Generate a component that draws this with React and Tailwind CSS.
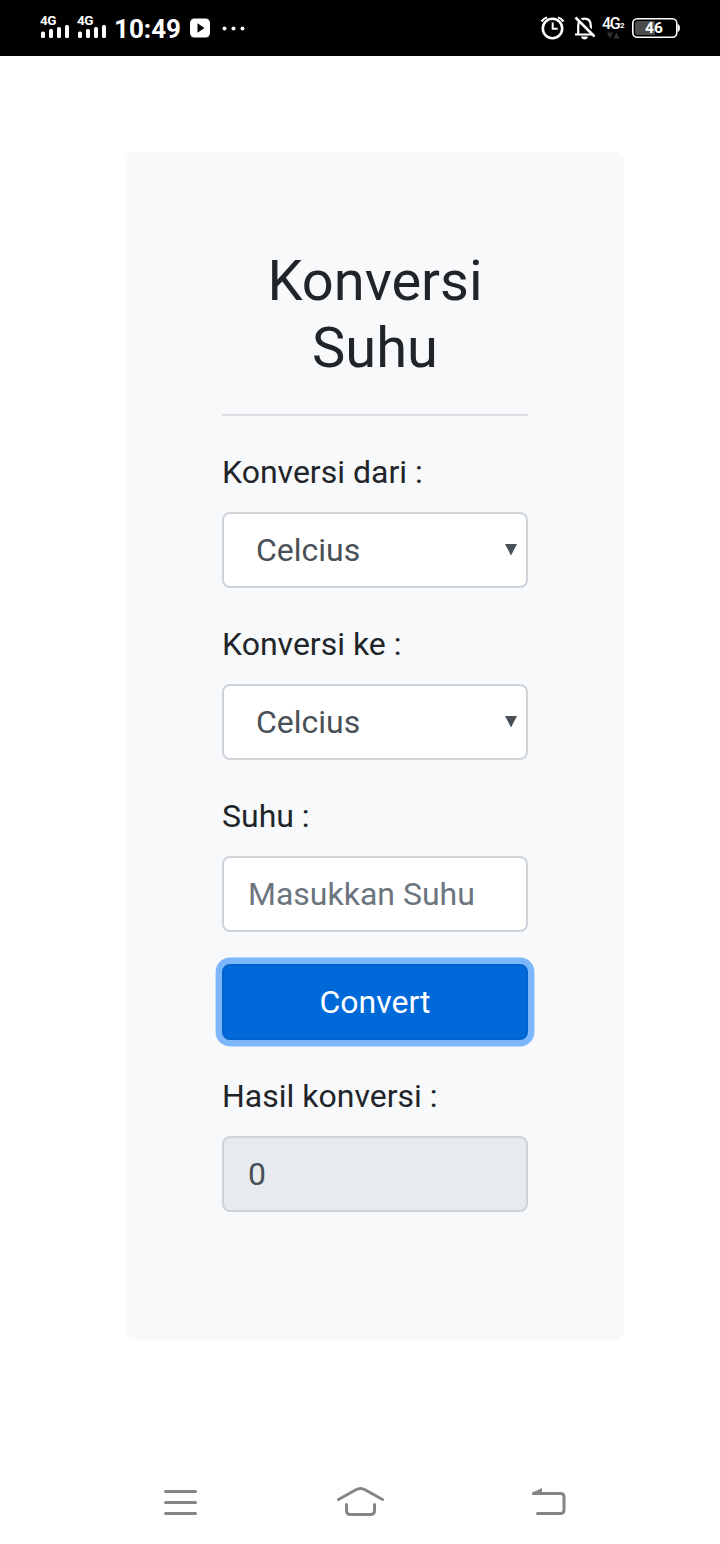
import React from "react";

function Signal() {
  return (
    <div className="flex w-[29px] flex-col items-start">
      <span className="h-[11px] text-[13.5px] leading-[12px] font-bold tracking-[-0.6px]">4G</span>
      <svg className="-mt-px" width="29" height="14" viewBox="0 0 29 14" fill="#fff">
        <rect x="1" y="7.5" width="4" height="6.5" rx="1.5" />
        <rect x="9" y="5" width="4" height="9" rx="1.5" />
        <rect x="17" y="3" width="4" height="11" rx="1.5" />
        <rect x="25" y="1" width="4" height="13" rx="1.5" />
      </svg>
    </div>
  );
}

function StatusBar() {
  return (
    <header className="flex h-14 items-start bg-black pl-10 text-white">
      <div className="flex gap-2 pt-[14px]">
        <Signal />
        <Signal />
      </div>
      <span className="ml-2 w-[68px] pt-[13px] text-[26px] leading-8 font-bold whitespace-nowrap">10:49</span>
      <svg className="mt-[18px] ml-[8px]" width="21" height="20" viewBox="0 0 21 20">
        <rect x="0" y="0.5" width="20" height="19" rx="4.5" fill="#fff" />
        <path d="M7.5 5.2v9.6l7-4.8z" fill="#000" />
      </svg>
      <svg className="mt-[26px] ml-[11px]" width="23" height="5" viewBox="0 0 23 5" fill="#fff">
        <circle cx="2.5" cy="2.5" r="2" />
        <circle cx="11.5" cy="2.5" r="2" />
        <circle cx="20.5" cy="2.5" r="2" />
      </svg>
      <div className="ml-auto flex w-[180px] items-start">
        <svg className="mt-[15px]" width="26" height="26" viewBox="0 0 26 26" fill="none" stroke="#fff">
          <circle cx="12.5" cy="13.5" r="9.7" strokeWidth="2.6" />
          <path d="M12.7 7.5v6.3h5" strokeWidth="2" />
          <path d="M1.5 6.500Q4 3 7 2.500M23.5 6.500Q21 3 18 2.500" strokeWidth="2.2" />
        </svg>
        <svg className="mt-[15px] ml-[7px]" width="24" height="26" viewBox="0 0 24 26" fill="none" stroke="#fff">
          <path d="M5.2 19.5V11c0-5 2.5-7.3 6.3-7.3S17.8 6 17.8 11v8.5M2 19.5h19" strokeWidth="2.2" />
          <path d="M8 21.5h7c-.5 4-6.500 4-7 0z" fill="#fff" stroke="none" />
          <path d="M4.500 1.500l19 19" stroke="#000" strokeWidth="2" />
          <path d="M2.500 2.500l19 19" strokeWidth="2.500" />
        </svg>
        <div className="ml-[5px] flex w-[25px] flex-col pt-[15px]">
          <div className="flex h-4 items-start">
            <span className="w-[18px] text-[16px] leading-[17px] font-medium tracking-[-1.3px]">4G</span>
            <span className="pt-[6px] text-[8px] leading-[10px] font-bold">2</span>
          </div>
          <svg className="mt-px ml-[5px]" width="13" height="7" viewBox="0 0 13 7" fill="#333">
            <path d="M0 0.500h6L3 6.500zM6.500 6.500h6l-3-6z" />
          </svg>
        </div>
        <div className="relative mt-[18px] ml-[5px] h-5 w-12">
          <svg width="48" height="20" viewBox="0 0 48 20">
            <rect x="0.800" y="0.800" width="44" height="18.400" rx="4.500" fill="none" stroke="#fff" strokeWidth="1.600" />
            <path d="M6 3h17v14H6a3 3 0 0 1-3-3V6a3 3 0 0 1 3-3z" fill="#4c4c4c" />
            <path d="M46 6.500c2 .5 2 6.500 0 7z" fill="#fff" stroke="#fff" strokeWidth=".8" />
          </svg>
          <span className="absolute inset-y-0 left-0 w-[44px] text-center text-[15.5px] leading-5 font-bold">46</span>
        </div>
      </div>
    </header>
  );
}

function SelectField({ label, id }) {
  return (
    <div className="mb-8">
      <label htmlFor={id} className="mb-4 block leading-[48px]">{label}</label>
      <div className="relative">
        <select
          id={id}
          className="block h-[76px] w-full appearance-none rounded-lg border-2 border-[#ced4da] bg-white pl-8 text-[#495057] outline-none"
        >
          <option>Celcius</option>
        </select>
        <svg className="pointer-events-none absolute top-8 right-[10px]" width="13" height="12" viewBox="0 0 13 12">
          <path d="M0 0h12l-6 11.500z" fill="#495057" />
        </svg>
      </div>
    </div>
  );
}

function NavigationBar() {
  return (
    <nav className="mt-[140px] flex h-16 items-start text-[#868686]">
      <svg className="ml-[160px]" width="41" height="44" viewBox="0 0 41 44" fill="none" stroke="currentColor" strokeWidth="3" strokeLinecap="round">
        <path d="M5.500 11.500h30M5.500 22.500h30M5.500 33.500h30" />
      </svg>
      <svg className="ml-[134px]" width="50" height="44" viewBox="0 0 50 44" fill="none" stroke="currentColor" strokeWidth="3" strokeLinecap="round" strokeLinejoin="round">
        <path d="M3.500 19.500L20.500 10Q25.500 7.200 30.500 10L47.500 19.500" />
        <path d="M11.500 24.500v6q0 4 4 4h20q4 0 4-4v-6" />
      </svg>
      <svg className="ml-[144px]" width="40" height="44" viewBox="0 0 40 44" fill="none" stroke="currentColor" strokeWidth="3" strokeLinecap="round">
        <path d="M4.500 13.500h27q3.500 0 3.500 3.500v13q0 3.500-3.500 3.500H8.500" />
        <path d="M2.500 13L13 8v6z" fill="currentColor" stroke="none" />
      </svg>
    </nav>
  );
}

export default function App() {
  return (
    <div className="h-[1544px] overflow-hidden bg-white font-['Roboto',sans-serif]">
      <StatusBar />
      <main className="mt-24 ml-[126px] h-[1188px] w-[498px] rounded-lg bg-[#f8f9fb] p-24 text-[32px] text-[#212529]">
        <h1 className="h-[134px] text-center text-[56px] leading-[67.2px]">Konversi Suhu</h1>
        <hr className="mt-8 mb-8 border-t-2 border-[#dedfe2]" />
        <SelectField label="Konversi dari :" id="from" />
        <SelectField label="Konversi ke :" id="to" />
        <label htmlFor="temperature" className="mb-4 block leading-[48px]">Suhu :</label>
        <input
          id="temperature"
          placeholder="Masukkan Suhu"
          className="mb-8 block h-[76px] w-full rounded-lg border-2 border-[#ced4da] bg-white px-6 outline-none placeholder:text-[#6c757d]"
        />
        <button className="mb-8 block h-[76px] w-full rounded-lg border-2 border-[#0062cc] bg-[#0069d9] text-white shadow-[0_0_0_6.4px_#7cb6fb]">
          Convert
        </button>
        <label htmlFor="result" className="mb-4 block leading-[48px]">Hasil konversi :</label>
        <input
          id="result"
          readOnly
          value="0"
          className="block h-[76px] w-full rounded-lg border-2 border-[#ced4da] bg-[#e8ebee] px-6 text-[#495057] outline-none"
        />
      </main>
      <NavigationBar />
    </div>
  );
}
